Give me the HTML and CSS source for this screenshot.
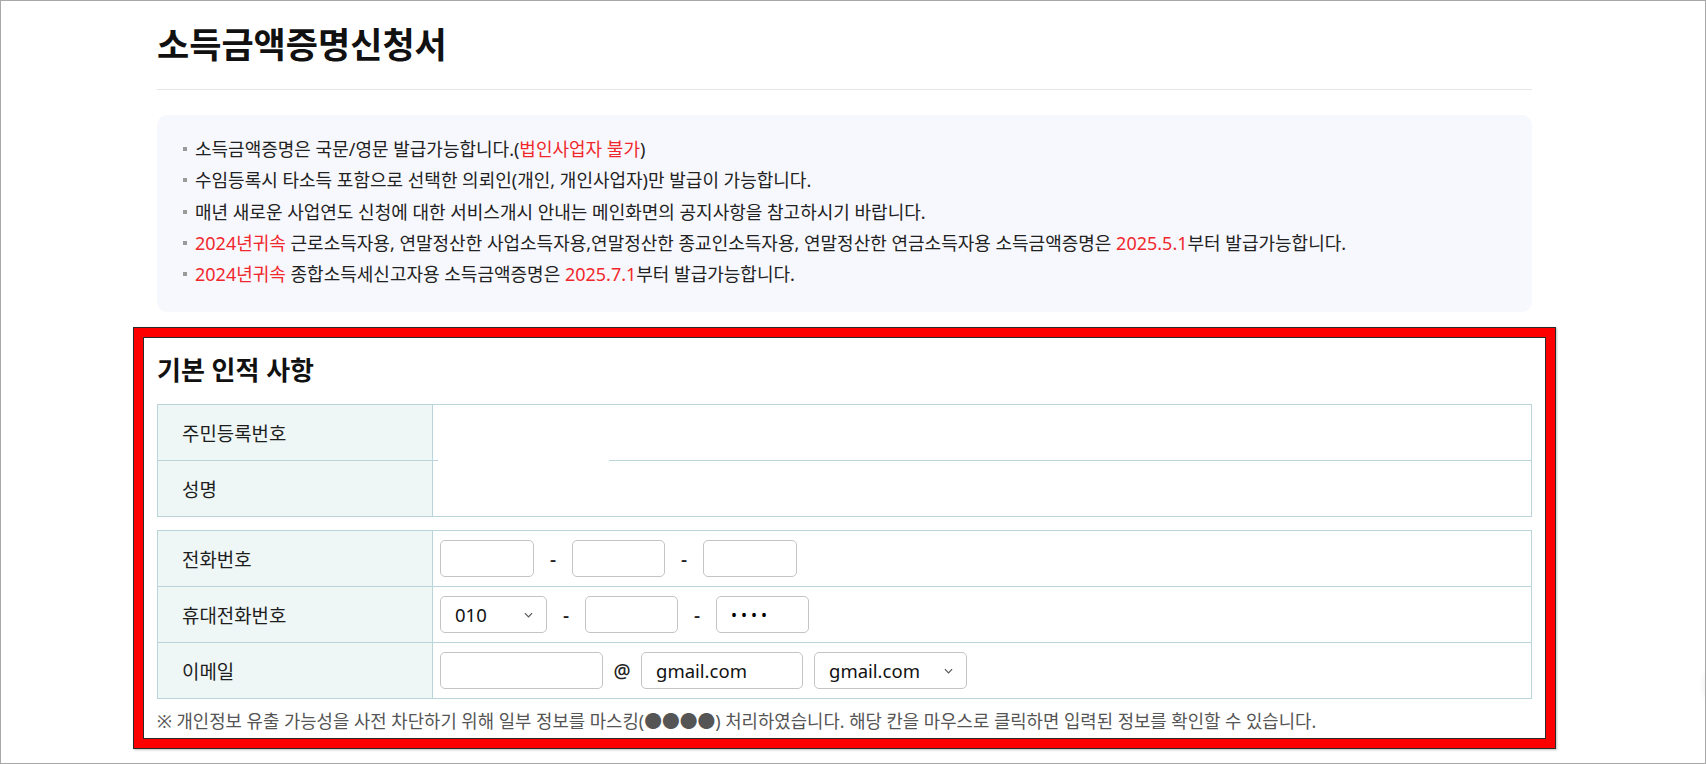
FILE: index.html
```html
<!DOCTYPE html>
<html lang="ko">
<head>
<meta charset="utf-8">
<title>소득금액증명신청서</title>
<link rel="stylesheet" href="styles.css">
</head>
<body>
<div class="window">
  <div class="page">
    <h1 class="page-title">소득금액증명신청서</h1>

    <div class="notice">
      <ul class="notice-list">
        <li>소득금액증명은 국문/영문 발급가능합니다.(<span class="red">법인사업자 불가</span>)</li>
        <li>수임등록시 타소득 포함으로 선택한 의뢰인(개인, 개인사업자)만 발급이 가능합니다.</li>
        <li>매년 새로운 사업연도 신청에 대한 서비스개시 안내는 메인화면의 공지사항을 참고하시기 바랍니다.</li>
        <li><span class="red">2024년귀속</span> 근로소득자용, 연말정산한 사업소득자용,연말정산한 종교인소득자용, 연말정산한 연금소득자용 소득금액증명은 <span class="red">2025.5.1</span>부터 발급가능합니다.</li>
        <li><span class="red">2024년귀속</span> 종합소득세신고자용 소득금액증명은 <span class="red">2025.7.1</span>부터 발급가능합니다.</li>
      </ul>
    </div>

    <section class="basic-info">
      <h2 class="section-title">기본 인적 사항</h2>

      <div class="form-table">
        <div class="th">주민등록번호</div>
        <div class="td mask-cell"><span class="mask-line"></span></div>
        <div class="th">성명</div>
        <div class="td"></div>
      </div>

      <div class="form-table second">
        <div class="th">전화번호</div>
        <div class="td">
          <input class="field w94" type="text">
          <span class="sep">-</span>
          <input class="field w93" type="text">
          <span class="sep">-</span>
          <input class="field w94" type="text">
        </div>

        <div class="th">휴대전화번호</div>
        <div class="td">
          <span class="select-wrap">
            <select class="field select w107"><option>010</option></select>
            <svg class="chev" viewBox="0 0 10 6" width="9" height="6"><path d="M1 1 L5 5 L9 1" fill="none" stroke="#555" stroke-width="1.3"/></svg>
          </span>
          <span class="sep">-</span>
          <input class="field w93" type="text">
          <span class="sep">-</span>
          <input class="field w93 pw" type="password" value="1234">
        </div>

        <div class="th">이메일</div>
        <div class="td">
          <input class="field w163" type="text">
          <span class="sep at">@</span>
          <input class="field w162" type="text" value="gmail.com">
          <span class="select-wrap gap">
            <select class="field select w153"><option>gmail.com</option></select>
            <svg class="chev" viewBox="0 0 10 6" width="9" height="6"><path d="M1 1 L5 5 L9 1" fill="none" stroke="#555" stroke-width="1.3"/></svg>
          </span>
        </div>
      </div>

      <p class="note">※ 개인정보 유출 가능성을 사전 차단하기 위해 일부 정보를 마스킹(●●●●) 처리하였습니다. 해당 칸을 마우스로 클릭하면 입력된 정보를 확인할 수 있습니다.</p>
    </section>
  </div>
  <span class="float-shadow"></span>
</div>
</body>
</html>
```

FILE: styles.css
```css
* {
  box-sizing: border-box;
}

html,
body {
  margin: 0;
  padding: 0;
  background: #fff;
}

body {
  font-family: "Noto Sans", "Noto Sans CJK KR", sans-serif;
  color: #222;
}

.window {
  position: relative;
  width: 1706px;
  height: 764px;
  border: 1px solid #a8a8a8;
  overflow: hidden;
  background: #fff;
}

.page {
  width: 1375px;
  margin-left: 156px;
}

.page-title {
  margin: 0;
  padding: 22px 0 22px;
  font-size: 35px;
  line-height: 44px;
  font-weight: 600;
  color: #111;
  border-bottom: 1px solid #e6e6e6;
}

.notice {
  margin-top: 25px;
  background: #f7f8fd;
  border-radius: 10px;
  padding: 19px 26px 22px;
}

.notice-list {
  list-style: none;
  margin: 0;
  padding: 0;
  font-size: 18px;
  line-height: 31.25px;
  color: #222;
  white-space: nowrap;
}

.notice-list li::before {
  content: "";
  display: inline-block;
  width: 4px;
  height: 4px;
  background: #9a9a9a;
  margin-right: 8px;
  vertical-align: middle;
  position: relative;
  top: -2px;
}

.red {
  color: #f0282d;
}

.basic-info {
  margin: 16px -23px 0;
  border: 9px solid #ff0000;
  box-shadow: 0 0 0 1px #2a2a2a, 1px 1px 2px 1px rgba(0, 0, 0, 0.25), inset 0 0 0 1px #2a2a2a;
  padding: 17px 14px 6px;
}

.section-title {
  margin: 0;
  font-size: 26px;
  line-height: 32px;
  font-weight: 700;
  color: #111;
}

.form-table {
  margin-top: 18px;
  display: grid;
  grid-template-columns: 275px 1fr;
  border-top: 1px solid #b9d5d9;
  border-left: 1px solid #b9d5d9;
}

.form-table.second {
  margin-top: 13px;
}

.th,
.td {
  height: 56px;
  border-right: 1px solid #b9d5d9;
  border-bottom: 1px solid #b9d5d9;
  display: flex;
  align-items: center;
}

.th {
  background: #eef7f6;
  padding-left: 24px;
  font-size: 18.9px;
  color: #1e1e1e;
}

.td {
  padding-left: 7px;
  background: #fff;
}

.mask-cell {
  position: relative;
}

.mask-line {
  position: absolute;
  left: 5px;
  bottom: -3px;
  width: 171px;
  height: 5px;
  background: #fff;
}

.field {
  height: 37px;
  border: 1px solid #c4c4c4;
  border-radius: 5px;
  font-family: "Noto Sans", "Noto Sans CJK KR", sans-serif;
  font-size: 18.5px;
  padding: 0 14px;
  color: #111;
  background: #fff;
  outline: none;
  margin: 0;
}

.pw {
  padding-left: 14px;
  font-size: 16px;
  letter-spacing: 4px;
  color: #000;
}

.w93 { width: 93px; }
.w94 { width: 94px; }
.w107 { width: 107px; }
.w153 { width: 153px; }
.w162 { width: 162px; }
.w163 { width: 163px; }

.sep {
  width: 38px;
  text-align: center;
  font-size: 19px;
  font-weight: 500;
  color: #222;
}

.select-wrap {
  position: relative;
  display: inline-flex;
}

.select-wrap.gap {
  margin-left: 11px;
}

.select {
  appearance: none;
  -webkit-appearance: none;
  padding-left: 14px;
  line-height: 35px;
}

.chev {
  position: absolute;
  right: 14px;
  top: 50%;
  margin-top: -3px;
  pointer-events: none;
}

.note {
  margin: 10px 0 0;
  font-size: 17.8px;
  line-height: 24px;
  color: #555;
  white-space: nowrap;
}

.float-shadow {
  position: absolute;
  right: -54px;
  top: 658px;
  width: 52px;
  height: 52px;
  border-radius: 50%;
  background: #fff;
  box-shadow: 0 0 10px rgba(0, 0, 0, 0.16);
}
```
